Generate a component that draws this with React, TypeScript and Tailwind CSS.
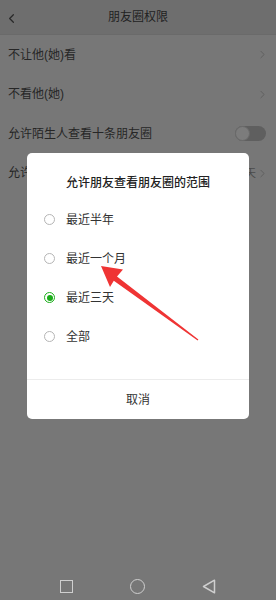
import { ChevronLeft, ChevronRight } from "lucide-react";

const font = "font-['Liberation_Sans','Noto_Sans_CJK_SC',sans-serif]";

const options = [
  { label: "最近半年", checked: false },
  { label: "最近一个月", checked: false },
  { label: "最近三天", checked: true },
  { label: "全部", checked: false },
];

export default function App() {
  return (
    <div className={`relative flex h-[600px] w-full flex-col overflow-hidden bg-[#777777] ${font}`}>
      <header className="relative flex h-[35px] shrink-0 items-center justify-center border-b border-[#6a6a6a] bg-[#6e6e6e]">
        <ChevronLeft className="absolute left-[4px] top-[11px] h-[15px] w-[15px] text-[#2a2a2a]" strokeWidth={2} />
        <span className="text-[12px] text-[#222]">朋友圈权限</span>
      </header>

      <div className="flex flex-col">
        <Row label="不让他(她)看" chevron />
        <Row label="不看他(她)" chevron />
        <Row label="允许陌生人查看十条朋友圈">
          <div className="mr-[10px] flex h-[15px] w-[31px] items-center rounded-full bg-[#5f5f5f]">
            <div className="h-[15px] w-[15px] rounded-full border border-[#6a6a6a] bg-[#7c7c7c]" />
          </div>
        </Row>
        <Row label="允许朋友查看" value="最近三天" chevron />
      </div>

      <div className="flex-1" />

      <nav className="flex h-[28px] shrink-0 items-center justify-center gap-[57px]">
        <div className="h-[13px] w-[13px] border-[1.5px] border-[#cfcfcf]" />
        <div className="h-[15px] w-[15px] rounded-full border-[1.5px] border-[#cfcfcf]" />
        <svg width="14" height="15" viewBox="0 0 14 15">
          <path d="M12.5 1.2 L1.5 7.5 L12.5 13.8 Z" fill="none" stroke="#cfcfcf" strokeWidth="1.5" strokeLinejoin="round" />
        </svg>
      </nav>

      <div className="absolute left-[27px] top-[153px] flex w-[222px] flex-col rounded-[5px] bg-white">
        <div className="pt-[22px] text-center text-[12px] leading-[16px] font-medium text-[#222]">
          允许朋友查看朋友圈的范围
        </div>
        <div className="mt-[9px] flex flex-col">
          {options.map((o) => (
            <div key={o.label} className="flex h-[39px] items-center gap-[11px] pl-[17px]">
              {o.checked ? (
                <span className="flex h-[11px] w-[11px] items-center justify-center rounded-full border-[1.5px] border-[#1aad19]">
                  <span className="h-[6px] w-[6px] rounded-full bg-[#1aad19]" />
                </span>
              ) : (
                <span className="h-[11px] w-[11px] rounded-full border border-[#b5b5b5]" />
              )}
              <span className="text-[12px] text-[#333]">{o.label}</span>
            </div>
          ))}
        </div>
        <div className="mt-[23px] border-t border-[#ececec]" />
        <div className="flex h-[39px] items-center justify-center text-[12px] text-[#333]">取消</div>
      </div>

      <svg className="pointer-events-none absolute left-0 top-0" width="276" height="600" viewBox="0 0 276 600">
        <polygon
          points="101,266 123,269.5 117,276.6 198.4,339.4 197.6,340.6 113.8,280.8 110,287"
          fill="#ef3434"
        />
      </svg>
    </div>
  );
}

function Row({
  label,
  value,
  chevron,
  children,
}: {
  label: string;
  value?: string;
  chevron?: boolean;
  children?: React.ReactNode;
}) {
  return (
    <div className="flex h-[39.5px] items-center pl-[8px]">
      <span className="flex-1 text-[12px] text-[#262626]">{label}</span>
      {value && <span className="text-[11px] text-[#4a4a4a]">{value}</span>}
      {chevron && <ChevronRight className="mr-[7px] h-[13px] w-[13px] text-[#5a5a5a]" strokeWidth={1.5} />}
      {children}
    </div>
  );
}
